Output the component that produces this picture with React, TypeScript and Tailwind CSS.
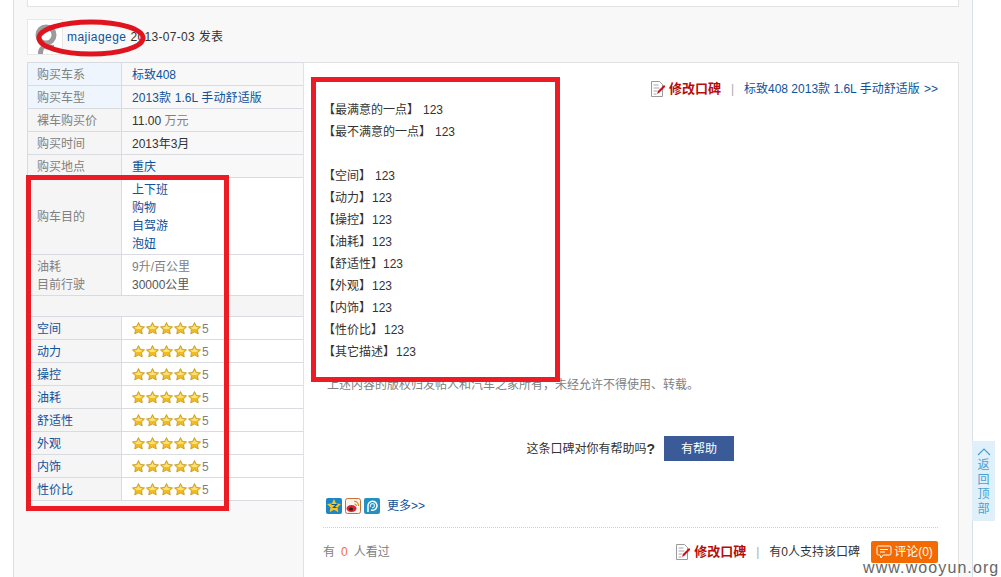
import type React from "react"

const LINK = "text-[#10519c]"

const Star = () => (
  <svg width="13" height="13" viewBox="0 0 24 24" className="block">
    <path d="M12 1l3.400 6.900 7.800 1.100-5.600 5.400 1.400 7.600L12 18.500 5 22l1.400-7.600L.8 9l7.800-1.100z" fill="#f3bb1c" stroke="#b9962a" strokeWidth="1.400" strokeLinejoin="round" />
    <path d="M12 4.500l2.300 4.800 5 .7-3.600 3H8.300l-3.600-3 5-.7z" fill="#ffe27a" />
  </svg>
)

const Row = ({ label, isLink, children, tint }: { label: React.ReactNode; isLink?: boolean; children: React.ReactNode; tint?: boolean }) => (
  <div className="flex h-[23px] border-b border-[#d8dbe0] items-center">
    <div className={`w-[94px] h-full shrink-0 flex items-center pl-[9px] pt-px border-r border-[#d8dbe0] ${tint ? "bg-[#eef5fc]" : "bg-[#f5f5f5]"} ${isLink ? LINK : "text-[#808080]"}`}>{label}</div>
    <div className="pl-[10px] pt-px flex-1">{children}</div>
  </div>
)

const EditIcon = () => (
  <svg width="14" height="16" viewBox="0 0 14 16" className="block">
    <path d="M.5.5h8l3 3v12H.5z" fill="#fff" stroke="#9a9a9a" />
    <path d="M2.500 4h5M2.500 7h6M2.500 10h4M2.500 13h3" stroke="#aaa" />
    <path d="M6 13l1-3 6-6 1.500 1.500-6 6z" fill="#c8101a" />
  </svg>
)

const EditLink = () => (
  <span className="flex items-center gap-[4px]">
    <EditIcon />
    <span className="font-bold text-[#b80c0c] text-[13px]">修改口碑</span>
  </span>
)

const ratings = ["空间", "动力", "操控", "油耗", "舒适性", "外观", "内饰", "性价比"]

const reviewLines: [string, string][] = [
  ["【空间】", "ml-[4px]"],
  ["【动力】", "ml-px"],
  ["【操控】", "ml-px"],
  ["【油耗】", "ml-px"],
  ["【舒适性】", "ml-0"],
  ["【外观】", "ml-px"],
  ["【内饰】", "ml-px"],
  ["【性价比】", "ml-px"],
  ["【其它描述】", "ml-px"],
]

export default function App() {
  return (
    <div className="relative w-[1001px] h-[577px] overflow-hidden bg-white text-[12px] text-[#333333] font-['Liberation_Sans','Noto_Sans_CJK_SC',sans-serif]">
      <div className="ml-[13px] w-[960px] h-full bg-[#f8f8f8] border-x border-[#d8dfe6] px-[13px]">
        <div className="h-[7px] bg-white border border-t-0 border-[#e2e2e2]" />

        {/* author */}
        <div className="mt-[12px] h-[36px] flex items-center">
          <div className="w-[36px] h-[36px] bg-white border border-[#e8e8e8] flex items-start justify-start overflow-hidden">
            <svg width="26" height="30" viewBox="0 0 26 30" className="ml-[5px] mt-[4px]">
              <circle cx="13" cy="11" r="8" fill="none" stroke="#9b9b9b" strokeWidth="5" />
              <path d="M5 30c0-6 3-9 8-10l8 1v3h-8c-2 0-3 2-3 6z" fill="#9b9b9b" />
            </svg>
          </div>
          <span className={`ml-[4px] tracking-[0.45px] ${LINK}`}>majiagege</span>
          <span className="ml-[4px] tracking-[0.33px]">2013-07-03 发表</span>
        </div>

        <div className="mt-[7px] flex h-[516px] items-start">
          {/* left table */}
          <div className="w-[276px] shrink-0 border-l border-t border-[#d8dbe0]">
            <Row label="购买车系" tint><span className={LINK}>标致408</span></Row>
            <Row label="购买车型" tint><span className={`tracking-[0.1px] ${LINK}`}>2013款 1.6L 手动舒适版</span></Row>
            <Row label="裸车购买价"><span>11.00 <span className="text-[#808080]">万元</span></span></Row>
            <Row label="购买时间"><span>2013年3月</span></Row>
            <Row label="购买地点"><span className={LINK}>重庆</span></Row>
            <div className="flex h-[77px] border-b border-[#d8dbe0] bg-white">
              <div className="w-[94px] shrink-0 bg-[#f5f5f5] border-r border-[#d8dbe0] pl-[9px] pt-[2px] flex items-center text-[#808080]">购车目的</div>
              <div className={`pl-[10px] pt-[2px] flex flex-col justify-center leading-[18px] ${LINK}`}>
                <span>上下班</span>
                <span>购物</span>
                <span>自驾游</span>
                <span>泡妞</span>
              </div>
            </div>
            <div className="flex h-[41px] border-b border-[#d8dbe0] bg-white text-[#808080] leading-[18px]">
              <div className="w-[94px] shrink-0 bg-[#f5f5f5] border-r border-[#d8dbe0] pl-[9px] pt-[2px] flex flex-col justify-center">
                <span>油耗</span>
                <span>目前行驶</span>
              </div>
              <div className="pl-[10px] pt-[2px] flex flex-col justify-center">
                <span>9升/百公里</span>
                <span className="text-[#555555]">30000公里</span>
              </div>
            </div>
            <div className="h-[21px] bg-[#f5f5f5] border-b border-[#d8dbe0]" />
            {ratings.map((r) => (
              <div key={r} className="bg-white">
                <Row label={r} isLink>
                  <span className="flex items-center text-[#808080]">
                    <span className="flex gap-px">
                      {[0, 1, 2, 3, 4].map((i) => (
                        <Star key={i} />
                      ))}
                    </span>
                    <span className="ml-[1px]">5</span>
                  </span>
                </Row>
              </div>
            ))}
          </div>

          {/* review */}
          <div className="flex-1 h-full bg-white border border-b-0 border-[#e2e2e2] pl-[19px] pr-[20px] flex flex-col">
            <div className="mt-[17px] h-[18px] flex items-center justify-end">
              <EditLink />
              <span className="mx-[10px] text-[#aaaaaa]">|</span>
              <span className={LINK}>标致408 2013款 1.6L 手动舒适版 <span className="ml-px">&gt;&gt;</span></span>
            </div>
            <div className="mt-px leading-[22px]">
              <div>【最满意的一点】<span className="ml-[4px]">123</span></div>
              <div>【最不满意的一点】<span className="ml-[4px]">123</span></div>
              <div className="h-[22px]" />
              {reviewLines.map(([label, offset]) => (
                <div key={label}>
                  {label}
                  <span className={`inline-block ${offset}`}>123</span>
                </div>
              ))}
            </div>
            <div className="mt-[11px] pl-[4px] leading-[22px] text-[#808080]">上述内容的版权归发帖人和汽车之家所有，未经允许不得使用、转载。</div>

            <div className="mt-[40px] h-[25px] flex items-center justify-end pr-[204px]">
              <span>这条口碑对你有帮助吗</span>
              <span className="font-bold text-[14px] leading-[14px]">?</span>
              <span className="ml-[9px] w-[70px] h-[25px] bg-[#3b5b98] text-white flex items-center justify-center">有帮助</span>
            </div>

            <div className="mt-[37px] h-[16px] flex items-center pl-[3px]">
              <svg width="16" height="16" viewBox="0 0 16 16" className="block">
                <rect width="16" height="16" rx="2" fill="#1a86c8" />
                <path d="M8 1l2.100 4.500 4.900.6-3.600 3.300 1 4.800L8 11.800 3.600 14.200l1-4.800L1 6.100l4.900-.6z" fill="#fcc419" />
                <path d="M5.500 6.500h5l-3 3h3" fill="none" stroke="#0d5c96" strokeWidth="1.200" />
              </svg>
              <svg width="16" height="16" viewBox="0 0 16 16" className="block ml-[3px]">
                <rect x=".5" y=".5" width="15" height="15" rx="2" fill="#fdf3ea" stroke="#c8703a" />
                <ellipse cx="6.500" cy="10.500" rx="5" ry="3.500" fill="#d9232e" />
                <ellipse cx="6" cy="11" rx="2" ry="1.500" fill="#222" />
                <path d="M9 3.500a4 4 0 0 1 4.500 4.500M9.500 6a1.800 1.800 0 0 1 1.800 2" fill="none" stroke="#e88a1a" strokeWidth="1.200" />
              </svg>
              <svg width="16" height="16" viewBox="0 0 16 16" className="block ml-[3px]">
                <rect width="16" height="16" rx="2" fill="#2390c0" />
                <path d="M4 14V8a4.500 4.500 0 1 1 3 4" fill="none" stroke="#fff" strokeWidth="1.500" />
                <path d="M6.500 9V7.500a2 2 0 1 1 1.500 2" fill="none" stroke="#cdeefa" strokeWidth="1.200" />
              </svg>
              <span className={`ml-[7px] ${LINK}`}>更多&gt;&gt;</span>
            </div>

            <div className="mt-[13px] border-t border-dotted border-[#c5d5dc]" />

            <div className="mt-[13px] h-[22px] flex items-center">
              <span className="text-[#808080]">有<span className="mx-[6px] text-[#f0703a]">0</span>人看过</span>
              <span className="ml-auto"><EditLink /></span>
              <span className="mx-[10px] text-[#aaaaaa]">|</span>
              <span>有0人支持该口碑</span>
              <span className="ml-[11px] w-[67px] h-[22px] rounded-[2px] bg-[#f56a00] text-white flex items-center justify-center gap-[2px]">
                <svg width="16" height="14" viewBox="0 0 16 14" className="block">
                  <path d="M2.500 1h11a1.500 1.500 0 0 1 1.500 1.500v6a1.500 1.500 0 0 1-1.500 1.500H7l-2 3-1-3H2.500A1.500 1.500 0 0 1 1 8.500v-6A1.500 1.500 0 0 1 2.500 1zM4 4.500h8M4 7h5" fill="none" stroke="#fff" />
                </svg>
                评论(0)
              </span>
            </div>
          </div>
        </div>
      </div>

      {/* back to top */}
      <div className="absolute left-[972px] top-[441px] w-[23px] h-[80px] bg-[#dff0fa] text-[#4a9fd0] flex flex-col items-center text-[12px] leading-[14.500px]">
        <svg width="14" height="8" viewBox="0 0 14 8" className="mt-[7px] mb-[2px] block">
          <path d="M1 7l6-6 6 6" fill="none" stroke="#4a9fd0" strokeWidth="1.200" />
        </svg>
        <span>返</span>
        <span>回</span>
        <span>顶</span>
        <span>部</span>
      </div>

      {/* hand-drawn marks on the screenshot */}
      <div className="absolute left-[26px] top-[175px] w-[203px] h-[336px] border-[5px] border-[#ed1c24]" />
      <div className="absolute left-[311px] top-[77px] w-[249px] h-[305px] border-[5px] border-[#ed1c24]" />
      <svg width="112" height="40" viewBox="0 0 112 40" className="absolute left-[35px] top-[18px]">
        <ellipse cx="56" cy="20" rx="52" ry="16" fill="none" stroke="#e0141e" strokeWidth="5" />
      </svg>

      <div className="absolute left-[863px] top-[558px] text-[16px] leading-[20px] tracking-[1.1px] text-[#666666] font-['Liberation_Sans',sans-serif]">www.wooyun.org</div>
    </div>
  )
}
